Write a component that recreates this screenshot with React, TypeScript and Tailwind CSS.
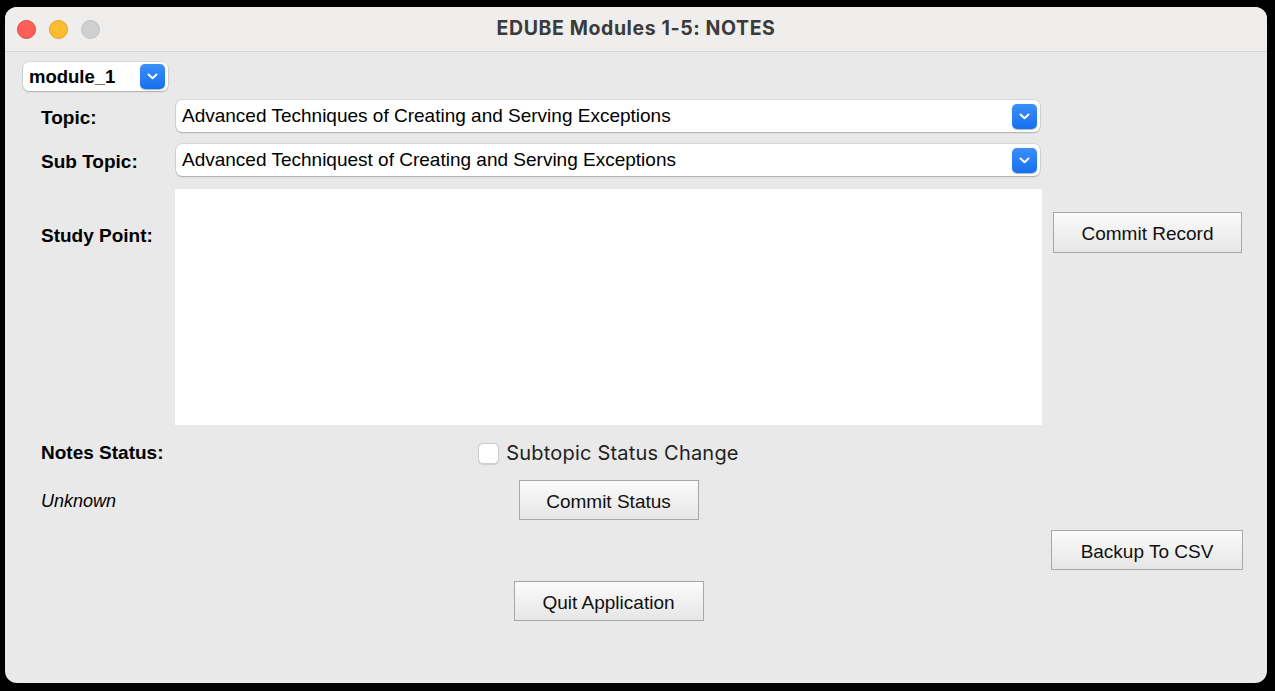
import React, { useState } from 'react';

const labelFont = { fontFamily: '"Liberation Sans", Arial, sans-serif' };

function Chevron() {
  return (
    <span className="flex h-[25px] w-[25px] items-center justify-center rounded-[5px] bg-gradient-to-b from-[#3b8ff8] to-[#1470ef] shadow-[0_0.5px_1px_rgba(0,0,0,0.3)]">
      <svg width="11" height="7" viewBox="0 0 11 7" fill="none">
        <path d="M1.5 1.5 L5.5 5.2 L9.5 1.5" stroke="white" strokeWidth="2" strokeLinecap="round" strokeLinejoin="round" />
      </svg>
    </span>
  );
}

function Select({ value, className }: { value: string; className: string }) {
  return (
    <div
      className={`flex items-center justify-between rounded-[6px] bg-white pl-[6px] pr-[3px] shadow-[0_0_0_0.5px_rgba(0,0,0,0.15),0_1px_1.5px_rgba(0,0,0,0.2)] ${className}`}
    >
      <span className="truncate pt-[1px] text-[19px] text-black" style={labelFont}>{value}</span>
      <Chevron />
    </div>
  );
}

function Btn({ children, className }: { children: React.ReactNode; className: string }) {
  return (
    <button
      className={`flex items-center justify-center border border-[#a8a8a8] bg-gradient-to-b from-[#fbfbfb] to-[#e6e6e6] pt-[4px] text-[19px] text-[#111] ${className}`}
      style={labelFont}
    >
      {children}
    </button>
  );
}

function Label({ children }: { children: React.ReactNode }) {
  return (
    <span className="text-[19px] font-bold text-black" style={labelFont}>
      {children}
    </span>
  );
}

export default function App() {
  const [checked, setChecked] = useState(false);

  return (
    <div className="h-[691px] w-[1275px] overflow-hidden bg-black pl-[5px] pt-[7px]">
      <div className="flex h-[676px] w-[1262px] flex-col overflow-hidden rounded-[12px] bg-[#e9e9e9]">
        {/* Title bar */}
        <div className="relative flex h-[45px] shrink-0 items-center border-b border-[#d4d4d4] bg-[#efeeed]">
          <div className="flex items-center gap-[13px] pl-[12px]">
            <span className="h-[19px] w-[19px] rounded-full border border-[#e0443e] bg-[#fe5f57]" />
            <span className="h-[19px] w-[19px] rounded-full border border-[#dea123] bg-[#febc2e]" />
            <span className="h-[19px] w-[19px] rounded-full border border-[#c4c4c4] bg-[#d0cfcf]" />
          </div>
          <div
            className="absolute inset-x-0 text-center text-[19.5px] font-bold tracking-[0.6px] text-[#3b3b3b]"
            style={{ fontFamily: 'Inter, "Liberation Sans", sans-serif' }}
          >
            EDUBE Modules 1-5: NOTES
          </div>
        </div>

        {/* Content */}
        <div className="flex flex-col">
          <div className="mt-[10px] pl-[18px]">
            <div className="flex h-[29px] w-[145px] items-center justify-between rounded-[6px] bg-white pl-[6px] pr-[3px] shadow-[0_0_0_0.5px_rgba(0,0,0,0.15),0_1px_1.5px_rgba(0,0,0,0.2)]">
              <span className="pt-[1px] text-[18.5px] font-bold text-black" style={labelFont}>module_1</span>
              <Chevron />
            </div>
          </div>

          {/* Topic */}
          <div className="mt-[9px] flex h-[32px] items-center">
            <div className="w-[170px] pl-[36px] pt-[5px]"><Label>Topic:</Label></div>
            <Select value="Advanced Techniques of Creating and Serving Exceptions" className="ml-[1px] h-[32px] w-[864px]" />
          </div>

          {/* Sub Topic */}
          <div className="mt-[12px] flex h-[32px] items-center">
            <div className="w-[170px] pl-[36px] pt-[4px]"><Label>Sub Topic:</Label></div>
            <Select value="Advanced Techniquest of Creating and Serving Exceptions" className="ml-[1px] h-[32px] w-[864px]" />
          </div>

          {/* Study Point */}
          <div className="mt-[13px] flex h-[236px]">
            <div className="w-[170px] pl-[36px] pt-[33px]"><Label>Study Point:</Label></div>
            <textarea className="h-[236px] w-[867px] resize-none bg-white outline-none" />
            <div className="pl-[11px] pt-[23px]">
              <Btn className="h-[41px] w-[189px]">Commit Record</Btn>
            </div>
          </div>

          {/* Notes Status */}
          <div className="mt-[13px] flex h-[30px] items-center">
            <div className="w-[170px] pl-[36px] pt-[1px]"><Label>Notes Status:</Label></div>
            <div className="flex w-[867px] justify-center">
              <label className="flex cursor-default items-center gap-[7px]">
                <span
                  onClick={() => setChecked(!checked)}
                  className="flex h-[21px] w-[21px] items-center justify-center rounded-[5px] border border-[#cfcfcf] bg-white shadow-[0_0.5px_1px_rgba(0,0,0,0.12)]"
                >
                  {checked && (
                    <svg width="13" height="11" viewBox="0 0 13 11" fill="none">
                      <path d="M1.5 6 L5 9.5 L11.5 1.5" stroke="#1470ef" strokeWidth="2" />
                    </svg>
                  )}
                </span>
                <span
                  className="text-[20px] text-[#222]"
                  style={{ fontFamily: 'Inter, "Liberation Sans", sans-serif', letterSpacing: '0.2px' }}
                >
                  Subtopic Status Change
                </span>
              </label>
            </div>
          </div>

          {/* Unknown / Commit Status */}
          <div className="mt-[12px] flex h-[40px] items-center">
            <div className="w-[170px] pl-[36px] pt-[2px]">
              <span className="text-[18px] italic text-black" style={labelFont}>Unknown</span>
            </div>
            <div className="flex w-[867px] justify-center">
              <Btn className="h-[40px] w-[180px]">Commit Status</Btn>
            </div>
          </div>

          {/* Backup */}
          <div className="mt-[10px] flex h-[40px]">
            <div className="w-[1037px]" />
            <div className="pl-[9px]">
              <Btn className="h-[40px] w-[192px]">Backup To CSV</Btn>
            </div>
          </div>

          {/* Quit */}
          <div className="mt-[11px] flex h-[40px]">
            <div className="w-[170px]" />
            <div className="flex w-[867px] justify-center">
              <Btn className="h-[40px] w-[190px]">Quit Application</Btn>
            </div>
          </div>
        </div>
      </div>
    </div>
  );
}
